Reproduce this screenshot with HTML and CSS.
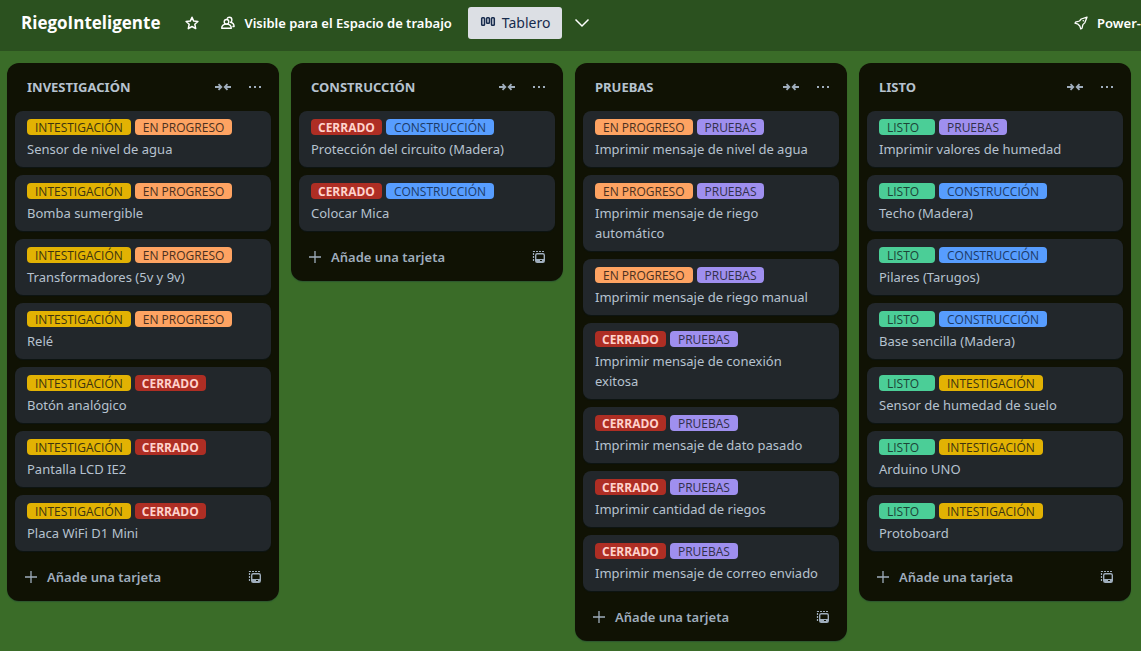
FILE: index.html
```html
<!DOCTYPE html>
<html lang="es">
<head>
<meta charset="utf-8">
<title>RiegoInteligente</title>
<link rel="stylesheet" href="styles.css">
</head>
<body>
<svg class="defs" aria-hidden="true">
  <symbol id="collapse" viewBox="0 0 16 16"><path d="M0 8h6M3.500 5.200L6.300 8l-2.800 2.800M16 8h-6M12.500 5.200L9.700 8l2.800 2.800" fill="none" stroke="currentColor" stroke-width="1.800"/></symbol>
  <symbol id="dots" viewBox="0 0 16 16"><path d="M2 7h2v2H2zM7 7h2v2H7zM12 7h2v2h-2z" fill="currentColor"/></symbol>
  <symbol id="plus" viewBox="0 0 16 16"><path d="M8 2v12M2 8h12" fill="none" stroke="currentColor" stroke-width="1.300"/></symbol>
  <symbol id="template" viewBox="0 0 16 16"><path d="M2.500 12V2.500H13" fill="none" stroke="currentColor" stroke-width="1.200" stroke-dasharray="2 1"/><rect x="4.700" y="4.700" width="8.600" height="8.600" rx="1.500" fill="none" stroke="currentColor" stroke-width="1.400"/><path d="M5 10h8v3H5z" fill="currentColor"/><path d="M9 11h2v1H9z" fill="#101204"/></symbol>
</svg>
<header class="bar">
  <h1 class="title">RiegoInteligente</h1>
  <button class="bar-btn star" aria-label="Destacar"><svg class="icon" viewBox="0 0 16 16"><path d="M8 2.200l1.700 3.900 4.200.4-3.100 2.700.9 4.400L8 11.500l-3.700 2.100.9-4.400-3.100-2.700 4.200-.4z" fill="none" stroke="currentColor" stroke-width="1.500" stroke-linejoin="round"/></svg></button>
  <button class="bar-btn visibility"><svg class="icon" viewBox="0 0 16 16"><g fill="none" stroke="currentColor" stroke-width="1.400" stroke-linejoin="round"><circle cx="6.500" cy="6.800" r="2.300"/><path d="M1.700 13.300c0-2.700 2-4.200 4.800-4.200s4.800 1.500 4.800 4.200zM7 3.700c.5-1 1.300-1.500 2.300-1.500 1.600 0 2.600 1.200 2.600 2.700 0 1.100-.5 1.900-1.300 2.400 2.200.6 3.500 2 3.500 4.200h-1.700"/></g></svg><span>Visible para el Espacio de trabajo</span></button>
  <button class="bar-btn board-btn"><svg class="icon" viewBox="0 0 16 16"><g fill="none" stroke="currentColor" stroke-width="1.500"><rect x="1.700" y="2.700" width="2.800" height="7.600" rx=".8"/><rect x="6.600" y="2.700" width="2.800" height="5.600" rx=".8"/><rect x="11.500" y="2.700" width="2.800" height="7.600" rx=".8"/></g></svg><span>Tablero</span></button>
  <button class="bar-btn more" aria-label="Más vistas"><svg class="icon" viewBox="0 0 16 16"><path d="M1.500 4.500L8 11l6.500-6.500" fill="none" stroke="currentColor" stroke-width="1.500"/></svg></button>
  <button class="bar-btn power"><svg class="icon" viewBox="0 0 16 16"><path d="M14 2.200L8.200 4 6.500 6 2.500 7.200 2 8.200l3 1 1.800 1.800 1 3 1.200-.7.900-3.700 2-2z" fill="none" stroke="currentColor" stroke-width="1.300" stroke-linejoin="round"/><circle cx="10.300" cy="5.800" r=".8" fill="currentColor"/></svg><span>Power-</span></button>
</header>
<main class="board" id="board"></main>
<script src="board.js"></script>
</body>
</html>
```
FILE: styles.css
```css
* { box-sizing: border-box; }
body {
  margin: 0;
  min-height: 100vh;
  overflow: hidden;
  background: #3a6c28;
  color: #b6c2cf;
  font: 13px/20px "Noto Sans", "Open Sans", sans-serif;
}
button { border: 0; padding: 0; background: none; color: inherit; font: inherit; cursor: pointer; }
.defs { display: none; }
.icon { display: block; flex: none; width: 16px; height: 16px; }
.bar {
  display: flex;
  align-items: center;
  height: 51px;
  padding: 0 0 5px 21px;
  background: #2b511f;
  color: #fff;
  white-space: nowrap;
}
.title { margin: 0; font: 700 17px/24px "Open Sans", sans-serif; }
.bar-btn { display: flex; flex: none; align-items: center; gap: 8px; height: 32px; font-weight: 600; }
.star { margin-left: 24px; }
.visibility { margin-left: 20px; }
.board-btn { gap: 6px; margin-left: 16px; padding: 0 12px; border-radius: 3px; background: #dcdfe4; color: #172b4d; font-weight: 400; font-size: 14px; }
.more { margin-left: 12px; }
.power { margin-left: auto; gap: 8px; }
.board { display: flex; align-items: flex-start; gap: 12px; padding: 12px 7px; }
.list { flex: none; width: 272px; padding: 8px; border-radius: 12px; background: #101204; box-shadow: 0 1px 1px #091e4240; }
.list-head { display: flex; align-items: center; gap: 16px; height: 32px; margin-bottom: 8px; padding: 0 8px 0 12px; color: #9fadbc; }
.list-title { flex: 1; margin: 0; color: #b6c2cf; font-size: 13px; line-height: 20px; font-weight: 700; }
.cards { display: grid; gap: 8px; margin: 0; padding: 0; list-style: none; }
.card { padding: 8px 12px; border-radius: 8px; background: #22272b; box-shadow: 0 1px 1px #091e4240; }
.labels { display: flex; gap: 4px; margin-bottom: 4px; }
.label { min-width: 56px; height: 16px; padding: 0 8px; border-radius: 4px; font-family: "Open Sans", sans-serif; font-size: 12px; line-height: 17px; white-space: nowrap; }
.yellow { background: #e2b203; color: #3d3410; }
.orange { background: #fea362; color: #4a3020; }
.red { background: #ae2e24; color: #ffd2cc; padding: 0 7px; font-weight: 700; }
.blue { background: #579dff; color: #1c3a66; }
.purple { background: #9f8fef; color: #32304a; }
.green { background: #4bce97; color: #1c4437; }
.card-title { margin: 0; }
.list-foot { display: flex; align-items: center; justify-content: space-between; height: 32px; margin-top: 10px; padding: 0 8px; color: #9fadbc; }
.add { display: flex; align-items: center; gap: 8px; font-weight: 600; }
```
FILE: board.js
```js
const colors = {
  "INTESTIGACIÓN": "yellow", "EN PROGRESO": "orange", "CERRADO": "red",
  "CONSTRUCCIÓN": "blue", "PRUEBAS": "purple", "LISTO": "green"
};
const I = "INTESTIGACIÓN", E = "EN PROGRESO", X = "CERRADO", C = "CONSTRUCCIÓN", P = "PRUEBAS", L = "LISTO";
const lists = [
  ["INVESTIGACIÓN", [
    [I, E, "Sensor de nivel de agua"], [I, E, "Bomba sumergible"], [I, E, "Transformadores (5v y 9v)"],
    [I, E, "Relé"], [I, X, "Botón analógico"], [I, X, "Pantalla LCD IE2"], [I, X, "Placa WiFi D1 Mini"]]],
  ["CONSTRUCCIÓN", [[X, C, "Protección del circuito (Madera)"], [X, C, "Colocar Mica"]]],
  ["PRUEBAS", [
    [E, P, "Imprimir mensaje de nivel de agua"], [E, P, "Imprimir mensaje de riego automático"],
    [E, P, "Imprimir mensaje de riego manual"], [X, P, "Imprimir mensaje de conexión exitosa"],
    [X, P, "Imprimir mensaje de dato pasado"], [X, P, "Imprimir cantidad de riegos"],
    [X, P, "Imprimir mensaje de correo enviado"]]],
  ["LISTO", [
    [L, P, "Imprimir valores de humedad"], [L, C, "Techo (Madera)"], [L, C, "Pilares (Tarugos)"],
    [L, C, "Base sencilla (Madera)"], [L, I, "Sensor de humedad de suelo"], [L, I, "Arduino UNO"], [L, I, "Protoboard"]]]
];
const icon = (id) => `<svg class="icon" aria-hidden="true"><use href="#${id}"/></svg>`;
const label = (t) => `<span class="label ${colors[t]}">${t}</span>`;
const card = ([a, b, t]) => `<li class="card"><div class="labels">${label(a)}${label(b)}</div><p class="card-title">${t}</p></li>`;
document.getElementById("board").innerHTML = lists.map(([name, cards]) => `
  <section class="list">
    <div class="list-head"><h2 class="list-title">${name}</h2>
      <button aria-label="Contraer lista">${icon("collapse")}</button>
      <button aria-label="Acciones">${icon("dots")}</button></div>
    <ul class="cards">${cards.map(card).join("")}</ul>
    <div class="list-foot"><button class="add">${icon("plus")}<span>Añade una tarjeta</span></button>
      <button aria-label="Crear desde plantilla">${icon("template")}</button></div>
  </section>`).join("");
```
